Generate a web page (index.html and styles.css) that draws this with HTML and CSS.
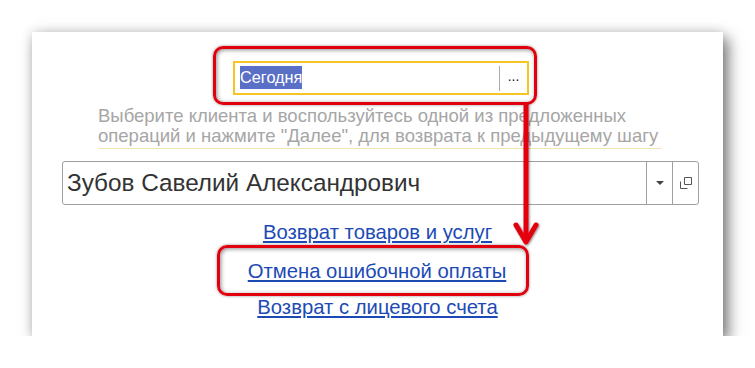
FILE: index.html
```html
<!DOCTYPE html>
<html lang="ru">
<head>
<meta charset="utf-8">
<title>Возврат</title>
<link rel="stylesheet" href="styles.css">
</head>
<body>
<div class="panel">
  <div class="mark mark-top">
    <div class="date-input">
      <div class="date-text"><span class="sel">Сегодня</span></div>
      <div class="date-btn">...</div>
    </div>
  </div>
  <div class="hint">Выберите клиента и воспользуйтесь одной из предложенных операций и нажмите "Далее", для возврата к предыдущему шагу</div>
  <div class="combo">
    <div class="combo-text">Зубов Савелий Александрович</div>
    <div class="combo-btn"><span class="tri"></span></div>
    <div class="combo-btn">
      <svg width="12" height="12" viewBox="0 0 12 12"><path d="M4.5 0.5h7v7h-7z M0.5 4.5v7h7" fill="none" stroke="#555" stroke-width="1"/></svg>
    </div>
  </div>
  <div class="links">
    <a href="#" class="link">Возврат товаров и услуг</a>
    <div class="mark mark-link"><a href="#" class="link">Отмена ошибочной оплаты</a></div>
    <a href="#" class="link">Возврат с лицевого счета</a>
  </div>
  <svg class="arrow" width="40" height="150" viewBox="0 0 40 150">
    <defs>
      <filter id="sh" x="-50%" y="-10%" width="200%" height="120%">
        <feDropShadow dx="1" dy="1" stdDeviation="1.2" flood-color="#000" flood-opacity="0.45"/>
      </filter>
    </defs>
    <g filter="url(#sh)" fill="none" stroke="#e2000f" stroke-width="5" stroke-linecap="round" stroke-linejoin="round">
      <path d="M20 2V138"/>
      <path d="M10 122L20 139L30 122"/>
    </g>
  </svg>
</div>
</body>
</html>
```

FILE: styles.css
```css
body{margin:0;padding:0;background:#fff;font-family:"Liberation Sans",Arial,sans-serif;}
.panel{position:relative;margin:32px 0 0 32px;padding-top:14px;box-sizing:border-box;width:691px;height:304px;background:#fff;box-shadow:5px 6px 14px rgba(0,0,0,.55),-2px -2px 10px rgba(0,0,0,.08);}
.mark{border:3px solid #e2000f;border-radius:10px;box-shadow:0 0 3px rgba(0,0,0,.45),inset 1px 1px 4px rgba(0,0,0,.45);box-sizing:border-box;}
.mark-top{width:324px;height:59px;margin-left:181px;padding:12px 0 0 17px;}
.date-input{display:flex;width:296px;height:34px;border:2px solid #f5c623;box-sizing:border-box;background:#fff;}
.date-text{flex:1;padding-left:5px;font-size:16.3px;line-height:20px;border-right:1px solid #aaa;margin:3px 0 2px 0;}
.sel{background:#5a6fc6;color:#fff;display:inline-block;padding:1px 0 2px;}
.date-btn{width:27px;text-align:center;font-size:14px;line-height:26px;color:#222;}
.hint{margin:1px 0 0 66px;width:564px;font-size:18.5px;line-height:20px;color:#a6a6a6;border-bottom:1px solid #f3e3ad;padding-bottom:2px;}
.combo{display:flex;margin:12px 0 0 30px;width:637px;height:44px;border:1px solid #a0a0a0;border-radius:3px;box-sizing:border-box;}
.combo-text{flex:1;font-size:24.3px;line-height:42px;color:#333;padding-left:4px;border-right:1px solid #a0a0a0;}
.combo-btn{width:25px;display:flex;align-items:center;justify-content:center;}
.combo-btn+.combo-btn{border-left:1px solid #a0a0a0;}
.tri{width:0;height:0;border-left:4px solid transparent;border-right:4px solid transparent;border-top:4px solid #444;}
.links{display:flex;flex-direction:column;align-items:center;margin-top:16px;}
.link{color:#1c4ab5;font-size:20.3px;line-height:22px;text-decoration:underline;}
.mark-link{width:312px;height:51px;margin:2px 0 0 -9px;display:flex;align-items:center;justify-content:center;padding-left:8px;}
.arrow{position:absolute;left:474px;top:71px;}
```
